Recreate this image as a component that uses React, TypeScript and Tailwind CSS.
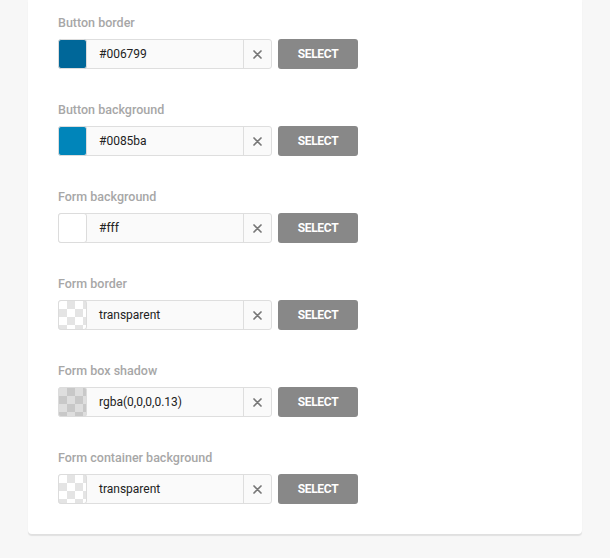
import React from "react";

type Row = { label: string; value: string; swatch: "solid" | "checker" | "checkerDark"; color?: string };

const rows: Row[] = [
  { label: "Button border", value: "#006799", swatch: "solid", color: "#006799" },
  { label: "Button background", value: "#0085ba", swatch: "solid", color: "#0085ba" },
  { label: "Form background", value: "#fff", swatch: "solid", color: "#ffffff" },
  { label: "Form border", value: "transparent", swatch: "checker" },
  { label: "Form box shadow", value: "rgba(0,0,0,0.13)", swatch: "checkerDark" },
  { label: "Form container background", value: "transparent", swatch: "checker" },
];

function Swatch({ row }: { row: Row }) {
  if (row.swatch === "solid") {
    return (
      <div
        className="w-[29px] h-[30px] shrink-0 rounded-[3px] border border-[#dcdcdc]"
        style={{ backgroundColor: row.color }}
      />
    );
  }
  const dark = row.swatch === "checkerDark";
  return (
    <div
      className={
        dark
          ? "w-[29px] h-[30px] shrink-0 rounded-[3px] border border-[#dcdcdc] bg-[#dedede] bg-[linear-gradient(45deg,#c8c8c8_25%,transparent_25%,transparent_75%,#c8c8c8_75%),linear-gradient(45deg,#c8c8c8_25%,transparent_25%,transparent_75%,#c8c8c8_75%)] bg-[length:16px_16px] bg-[position:0_0,8px_8px]"
          : "w-[29px] h-[30px] shrink-0 rounded-[3px] border border-[#dcdcdc] bg-white bg-[linear-gradient(45deg,#e4e4e4_25%,transparent_25%,transparent_75%,#e4e4e4_75%),linear-gradient(45deg,#e4e4e4_25%,transparent_25%,transparent_75%,#e4e4e4_75%)] bg-[length:16px_16px] bg-[position:0_0,8px_8px]"
      }
    />
  );
}

export default function App() {
  return (
    <div className="min-h-[558px] w-full bg-[#f7f7f7] px-[28px] font-['Roboto',sans-serif]">
      <div className="bg-white rounded-b-[4px] shadow-[0_2px_1px_rgba(0,0,0,0.09)] pl-[30px] pt-[12px] pb-[30px] flex flex-col gap-[30px]">
        {rows.map((row) => (
          <div key={row.label} className="flex flex-col gap-[7px]">
            <div className="h-[20px] leading-[22px] text-[12.5px] font-medium text-[#a7a7a7]">{row.label}</div>
            <div className="flex items-center gap-[6px]">
              <div className="flex w-[214px] h-[30px] rounded-[3px] border border-[#dedede] bg-[#fafafa] items-stretch">
                <div className="-ml-px -mt-px">
                  <Swatch row={row} />
                </div>
                <div className="flex-1 flex items-center pl-[12px] text-[12px] text-[#222] -mt-px">{row.value}</div>
                <div className="w-[28px] border-l border-[#dedede] flex items-center justify-center">
                  <svg width="9" height="9" viewBox="0 0 9 9">
                    <path d="M1 1L8 8M8 1L1 8" stroke="#777777" strokeWidth="1.7" strokeLinecap="round" />
                  </svg>
                </div>
              </div>
              <button className="w-[80px] h-[30px] rounded-[3px] bg-[#888888] text-white text-[12px] font-bold uppercase tracking-[-0.3px]">
                Select
              </button>
            </div>
          </div>
        ))}
      </div>
    </div>
  );
}
